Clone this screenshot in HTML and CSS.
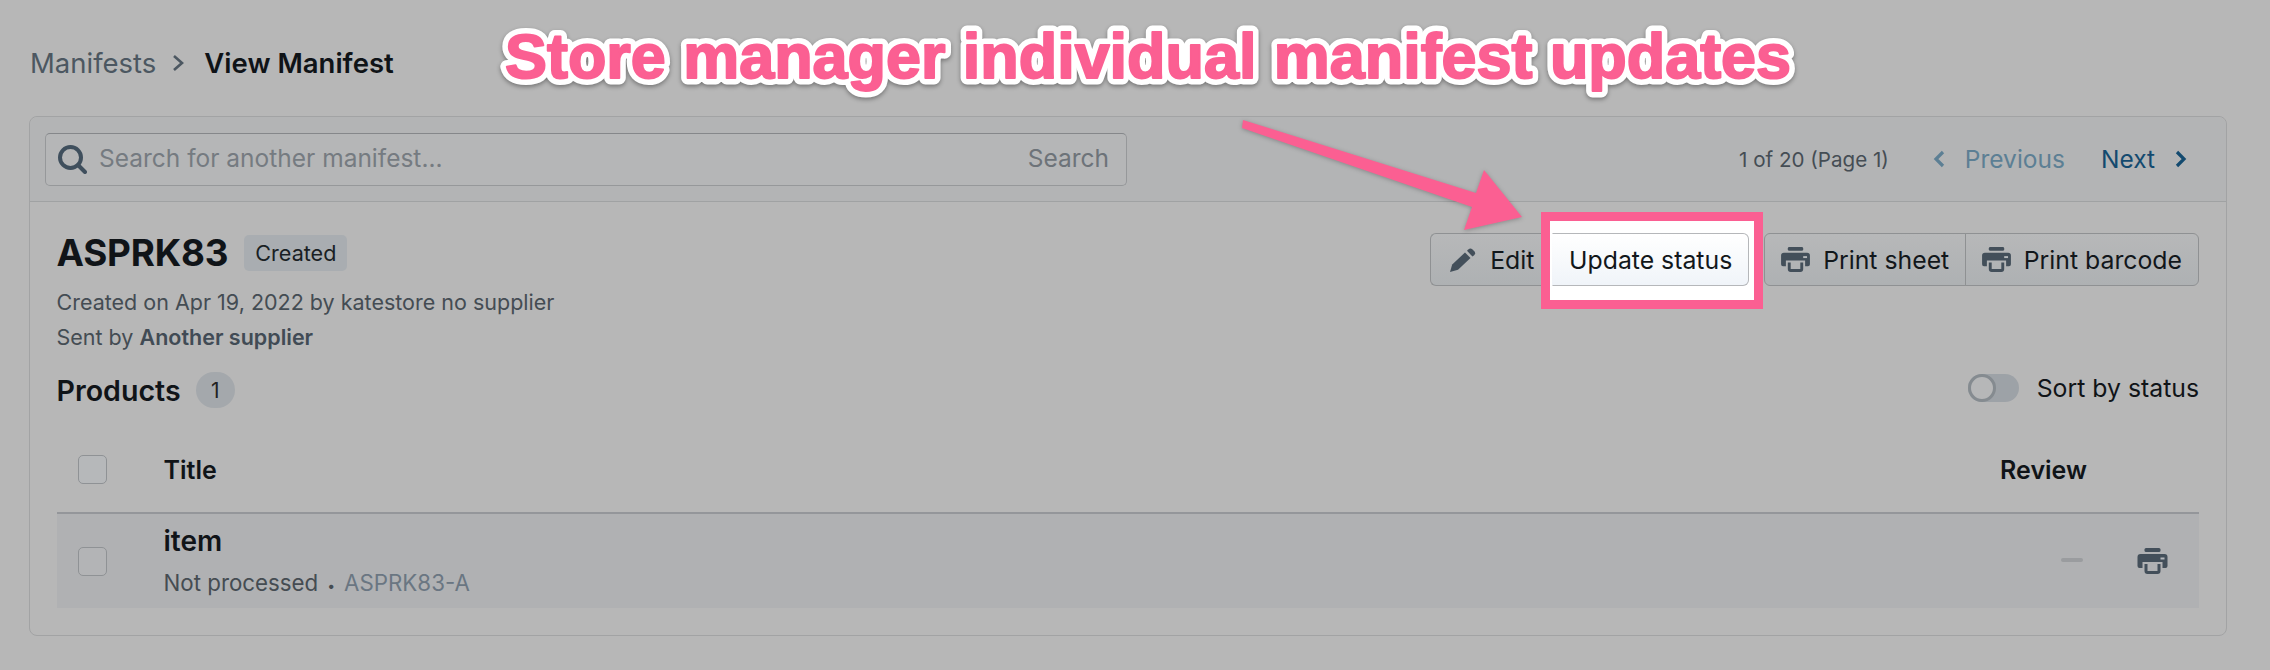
FILE: index.html
```html
<!DOCTYPE html>
<html lang="en">
<head>
<meta charset="utf-8">
<title>View Manifest</title>
<link rel="stylesheet" href="styles.css">
</head>
<body>
<svg class="defs" aria-hidden="true">
  <symbol id="printer" viewBox="0 0 30 26">
    <rect x="7" y="0" width="16" height="4" rx="1.5"/>
    <path d="M3 6h24a3 3 0 0 1 3 3v9a2 2 0 0 1-2 2h-3v-6H5v6H2a2 2 0 0 1-2-2V9a3 3 0 0 1 3-3z"/>
    <path d="M7 16h3v7h10v-7h3v7a3 3 0 0 1-3 3H10a3 3 0 0 1-3-3z"/>
    <rect class="led" x="23" y="9.5" width="4" height="2"/>
  </symbol>
</svg>
<div class="page">
  <nav class="crumbs">
    <span class="crumb-link">Manifests</span>
    <svg class="crumb-sep" viewBox="0 0 12 18"><path d="M2 2l8 7-8 7"/></svg>
    <span class="crumb-current">View Manifest</span>
  </nav>

  <section class="card">
    <header class="card-head">
      <div class="search">
        <svg class="search-icon" viewBox="0 0 29 29"><circle cx="12.5" cy="12.5" r="10.5"/><path d="M20 20l7 7"/></svg>
        <span class="search-placeholder">Search for another manifest...</span>
        <span class="search-action">Search</span>
      </div>
      <div class="pager">
        <span class="pager-count">1 of 20 (Page 1)</span>
        <span class="pager-link is-disabled">
          <svg class="chev" viewBox="0 0 12 18"><path d="M10 2L3 9l7 7"/></svg>
          <span>Previous</span>
        </span>
        <span class="pager-link is-next">
          <span>Next</span>
          <svg class="chev" viewBox="0 0 12 18"><path d="M2 2l7 7-7 7"/></svg>
        </span>
      </div>
    </header>

    <div class="card-body">
      <div class="summary">
        <div class="summary-info">
          <div class="title-row">
            <h1 class="title">ASPRK83</h1>
            <span class="badge">Created</span>
          </div>
          <p class="meta meta-first">Created on Apr 19, 2022 by katestore no supplier</p>
          <p class="meta">Sent by <strong>Another supplier</strong></p>
        </div>
        <div class="actions">
          <div class="btn-group">
            <button class="btn btn-edit">
              <svg class="icon-pencil" viewBox="0 0 26 24"><path d="M0 24l2.200-7.500L15 4.500l5.500 5.500L8 21.800z"/><path d="M17 2.800l1.300-1.300a3 3 0 0 1 4.200 0l1.600 1.600a3 3 0 0 1 0 4.200L22.500 8.600z"/></svg>
              <span>Edit</span>
            </button>
            <div class="highlight">
              <button class="btn btn-update">Update status</button>
            </div>
          </div>
          <div class="btn-group">
            <button class="btn btn-print"><svg class="icon-print"><use href="#printer"/></svg><span>Print sheet</span></button>
            <button class="btn btn-print btn-joined"><svg class="icon-print"><use href="#printer"/></svg><span>Print barcode</span></button>
          </div>
        </div>
      </div>

      <div class="products-row">
        <div class="products-title">
          <h2 class="products-heading">Products</h2>
          <span class="count">1</span>
        </div>
        <div class="sort">
          <span class="toggle"><span class="toggle-knob"></span></span>
          <span>Sort by status</span>
        </div>
      </div>

      <div class="table">
        <div class="table-head">
          <span class="checkbox"></span>
          <span class="col-title">Title</span>
          <span class="col-review">Review</span>
        </div>
        <div class="table-row">
          <span class="checkbox"></span>
          <div class="item">
            <div class="item-name">item</div>
            <div class="item-sub">Not processed<span class="dot">•</span><span class="item-code">ASPRK83-A</span></div>
          </div>
          <span class="dash"></span>
          <svg class="icon-print icon-row"><use href="#printer"/></svg>
        </div>
      </div>
    </div>
  </section>

  <svg class="annotation" viewBox="0 0 1300 80">
    <use href="#caption" class="caption-outline"/>
    <g class="caption-fill"><text id="caption" x="7" y="58">Store manager individual manifest updates</text></g>
  </svg>
  <svg class="arrow" viewBox="0 0 300 130"><polygon points="3,10 2,18 232,97 224,120 282,107 244,60 236,83"/></svg>
</div>
</body>
</html>
```

FILE: styles.css
```css
* { box-sizing: border-box; }
html, body { margin: 0; height: 100%; }
body {
  background: #b7b7b7;
  color: #101418;
  font-family: Inter, "Noto Sans", sans-serif;
  overflow: hidden;
}
.defs { display: none; }
.page { position: relative; height: 670px; padding: 0 43px 0 29px; }

/* breadcrumb */
.crumbs { height: 116px; display: flex; align-items: center; padding: 10px 0 0 1px; font-size: 27.5px; }
.crumb-link { color: #4c5761; }
.crumb-current { font-weight: 600; color: #0f1317; }
.crumb-sep { width: 12px; height: 18px; margin: 0 20px 0 16px; fill: none; stroke: #4c5761; stroke-width: 2.6; }

/* card */
.card { height: 520px; border: 1.5px solid #a2a3a4; border-radius: 8px; }
.card-head {
  height: 85px;
  display: flex;
  align-items: center;
  justify-content: space-between;
  padding: 0 39px 0 15px;
  background: #b3b4b5;
  border-bottom: 1.5px solid #a0a2a3;
  border-radius: 8px 8px 0 0;
}
.search {
  width: 1082px;
  height: 53px;
  display: flex;
  align-items: center;
  padding: 0 17px 2px 12px;
  background: #b5b6b7;
  border: 1.5px solid #96989a;
  border-top-color: #85878a;
  border-radius: 5px;
  font-size: 24.500px;
}
.search-icon { width: 29px; height: 29px; margin-top: 2px; fill: none; stroke: #3f4f5d; stroke-width: 4; stroke-linecap: round; }
.search-placeholder { margin-left: 12px; color: #757b81; flex: 1; }
.search-action { color: #6d7379; }
.pager { display: flex; align-items: center; font-size: 24.500px; }
.pager-count { font-size: 20.600px; color: #454d54; margin-right: 44px; }
.pager-link { display: flex; align-items: center; gap: 20px; }
.is-disabled { color: #5c7f94; margin-right: 36px; }
.is-next { color: #134a6f; }
.chev { width: 12px; height: 18px; fill: none; stroke: currentColor; stroke-width: 3.2; }

/* body */
.card-body { padding: 0 27px 0 26.500px; }
.summary { display: flex; justify-content: space-between; padding-top: 31px; }
.title-row { display: flex; align-items: center; gap: 16px; height: 40px; }
.title { margin: 0; font-size: 36.800px; font-weight: 700; line-height: 40px; letter-spacing: -0.2px; }
.badge { height: 36px; padding: 0 11px; display: flex; align-items: center; background: #a9adb1; border-radius: 5px; font-size: 21.600px; color: #1a1f24; }
.meta { margin: 0; font-size: 21.500px; line-height: 35px; color: #444c53; }
.meta-first { margin-top: 12px; }
.meta strong { font-weight: 600; color: #414b55; }

.actions { display: flex; gap: 15px; }
.btn-group { display: flex; height: 53px; }
.btn {
  display: flex;
  align-items: center;
  height: 53px;
  margin: 0;
  font: inherit;
  font-size: 24.800px;
  color: #12171b;
  background: linear-gradient(#b7b8b9, #aeb1b3);
  border: 1.5px solid #8f9193;
  cursor: pointer;
}
.btn-edit { width: 122px; padding: 0 0 0 19px; gap: 14px; border-radius: 6px 0 0 6px; border-right: 0; }
.icon-pencil { width: 26px; height: 24px; fill: #434f5a; }
.highlight { position: relative; z-index: 1; }
.highlight::before {
  content: "";
  position: absolute;
  z-index: -1;
  top: -21px;
  bottom: -23px;
  left: -11px;
  right: -14px;
  background: #fff;
  border: 9px solid #fb5f92;
}
.btn-update {
  width: 197px;
  justify-content: center;
  background: linear-gradient(#fff, #f0f4f9);
  border-color: #b5b7ba;
  border-left-color: transparent;
  border-radius: 0 6px 6px 0;
}
.btn-print { gap: 13px; padding: 0 16px; border-radius: 6px 0 0 6px; }
.btn-joined { border-left: 1.5px solid #8f9193; margin-left: -1.500px; border-radius: 0 6px 6px 0; }
.icon-print { width: 29px; height: 25px; fill: #434f5a; }
.led { fill: #b5b8bb; }

.products-row { display: flex; justify-content: space-between; align-items: center; height: 40px; margin-top: 15px; }
.products-title { display: flex; align-items: center; gap: 15px; }
.products-heading { margin: 0; font-size: 28.600px; font-weight: 600; }
.count { width: 39px; height: 36px; display: flex; align-items: center; justify-content: center; border-radius: 18px; background: #a4a8ac; font-size: 21px; color: #222; }
.sort { display: flex; align-items: center; gap: 18px; font-size: 24.800px; margin-top: -4px; }
.toggle { width: 51px; height: 28px; background: #9da2a7; border-radius: 14px; display: block; }
.toggle-knob { display: block; width: 28px; height: 28px; border-radius: 50%; background: #b6b7b8; border: 3px solid #858b90; }

.table { margin-top: 30px; }
.table-head { display: flex; align-items: center; height: 74px; padding: 0 21px 12px; border-bottom: 2px solid #94969a; font-size: 25px; font-weight: 600; }
.table-head .checkbox { margin-top: -2px; }
.checkbox { width: 29px; height: 29px; flex: none; background: #b6b8ba; border: 1.5px solid #8f9295; border-radius: 5px; }
.col-title { margin-left: 57px; flex: 1; }
.col-review { margin-right: 91px; }
.table-row { display: flex; align-items: center; height: 94px; padding: 0 31px 0 21px; background: #b0b1b3; }
.table-row .checkbox { background: #b3b4b6; }
.item { margin-left: 57px; flex: 1; padding-top: 2px; }
.item-name { font-size: 28px; font-weight: 600; line-height: 34px; }
.item-sub { font-size: 22.300px; line-height: 28px; margin-top: 11px; color: #454c52; }
.dot { margin: 0 9px; font-size: 14px; }
.item-code { color: #6a7682; }
.dash { width: 22px; height: 4px; border-radius: 2px; background: #9a9c9f; margin-right: 54px; margin-top: -2px; }
.icon-row { width: 31px; height: 26px; }

/* annotation overlay */
.annotation {
  position: absolute;
  left: 498px;
  top: 20px;
  width: 1300px;
  height: 80px;
  overflow: visible;
  font-family: "Liberation Sans", Arial, sans-serif;
  font-size: 62.900px;
  font-weight: 700;
  filter: drop-shadow(0 2px 2px rgba(0,0,0,.35));
}
.caption-outline { fill: #fff; stroke: #fff; stroke-width: 13px; stroke-linejoin: round; }
.caption-fill { fill: #fb5f92; stroke: #fb5f92; stroke-width: 2px; stroke-linejoin: round; }
.arrow {
  position: absolute;
  left: 1240px;
  top: 110px;
  width: 300px;
  height: 130px;
  fill: #fb5f92;
  filter: drop-shadow(0 1px 2px rgba(0,0,0,.25));
  z-index: 2;
}
```
